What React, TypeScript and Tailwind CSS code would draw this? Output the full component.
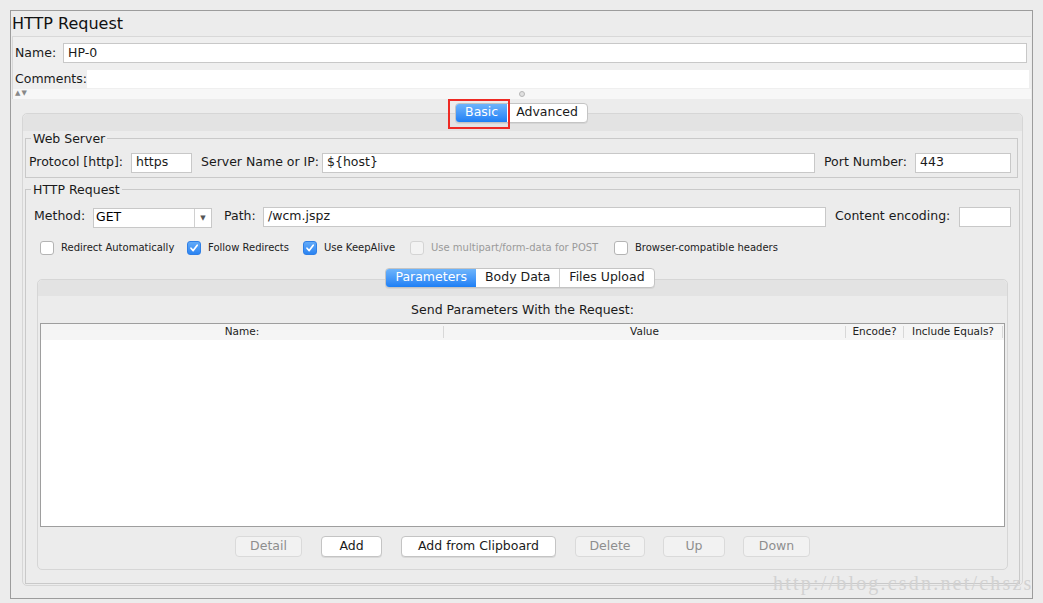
import React from "react"

const font = { fontFamily: '"DejaVu Sans", "Noto Sans", sans-serif' }

function Input({ value, className }: { value?: string; className?: string }) {
  return (
    <div
      className={
        "flex h-[20px] items-center border border-[#c8c8c8] bg-white px-[4px] text-[12.5px] text-[#1a1a1a] " +
        (className ?? "")
      }
    >
      {value}
    </div>
  )
}

function Check({ checked, disabled, label }: { checked?: boolean; disabled?: boolean; label: string }) {
  return (
    <div className="flex items-center gap-[7px]">
      <span
        className={
          "flex h-[14px] w-[14px] items-center justify-center rounded-[3px] border " +
          (checked
            ? "border-[#2f7fe6] bg-gradient-to-b from-[#62aaf8] to-[#2a84f2]"
            : disabled
              ? "border-[#d4d4d4] bg-[#f3f3f3]"
              : "border-[#b4b4b4] bg-white")
        }
      >
        {checked && (
          <svg width="10" height="10" viewBox="0 0 10 10">
            <path d="M2 5.2 L4.2 7.6 L8.2 2.2" stroke="white" strokeWidth="1.7" fill="none" strokeLinecap="round" strokeLinejoin="round" />
          </svg>
        )}
      </span>
      <span className={"text-[10px] " + (disabled ? "text-[#9a9a9a]" : "text-[#222]")}>{label}</span>
    </div>
  )
}

function Tabs({ items, active }: { items: string[]; active: number }) {
  return (
    <div className="flex h-[20px] overflow-hidden rounded-[4px] border border-[#c4c4c4] bg-white text-[12.5px] shadow-[0_1px_0_rgba(0,0,0,0.06)]">
      {items.map((t, i) => (
        <div
          key={t}
          className={
            "flex items-center px-[9px] " +
            (i === active
              ? "bg-gradient-to-b from-[#6db4fb] to-[#1c7ff5] text-white"
              : "text-[#1a1a1a]") +
            (i > 0 && i !== active + 1 ? " border-l border-[#d0d0d0]" : "")
          }
        >
          {t}
        </div>
      ))}
    </div>
  )
}

function Btn({ label, disabled, w }: { label: string; disabled?: boolean; w: string }) {
  return (
    <div
      className={
        "flex h-[21px] items-center justify-center rounded-[4px] border text-[12.5px] " +
        w +
        (disabled
          ? " border-[#dadada] bg-[#f2f2f2] text-[#8e8e8e]"
          : " border-[#c4c4c4] bg-white text-[#1a1a1a] shadow-[0_1px_0_rgba(0,0,0,0.08)]")
      }
    >
      {label}
    </div>
  )
}

export default function App() {
  return (
    <div className="relative h-[603px] w-[1043px] overflow-hidden bg-[#ececec] pl-[10px] pt-[10px]" style={font}>
      <div className="flex h-[589px] w-[1023px] flex-col border border-[#9c9c9c] bg-[#ececec]">
        {/* title */}
        <div className="flex h-[25px] items-center pl-[1px] text-[16px] text-[#111]">HTTP Request</div>

        {/* name / comments */}
        <div className="ml-[1px] mr-[1px] border-t border-l border-[#d8d8d8] bg-[#efefef] pt-[6px]">
          <div className="flex items-center">
            <span className="w-[50px] pl-[2px] text-[12.5px] text-[#1a1a1a]">Name:</span>
            <Input value="HP-0" className="w-[964px]" />
          </div>
          <div className="mt-[7px] flex items-center">
            <span className="w-[74px] pl-[2px] text-[12.5px] text-[#1a1a1a]">Comments:</span>
            <div className="h-[18px] w-[942px] bg-white" />
          </div>
          <div className="relative flex h-[10px] items-center bg-[#f7f7f7] pl-[2px] text-[7px] leading-none text-[#888]">
            <span>▲</span>
            <span className="ml-[1px]">▼</span>
            <span className="absolute left-[506px] top-[2px] h-[6px] w-[6px] rounded-full border border-[#b5b5b5] bg-[#e0e0e0]" />
          </div>
        </div>

        {/* main tab area */}
        <div className="relative flex-1 pl-[11px] pr-[9px] pt-[4px]">
          <div className="relative z-10 flex justify-center">
            <div className="pr-[2px]">
              <Tabs items={["Basic", "Advanced"]} active={0} />
            </div>
          </div>
          <div className="absolute left-[437px] top-[0px] z-20 h-[30px] w-[62px] border-2 border-[#ee2a24]" />

          <div className="-mt-[10px] h-[473px] rounded-[5px] border border-[#d6d6d6] bg-[#ececec]">
            <div className="h-[17px] rounded-t-[5px] bg-[#e3e3e3]" />
            <div className="pl-[2px] pr-[4px]">
              {/* Web server */}
              <fieldset className="mt-[1px] h-[46px] border border-[#c9c9c9] px-[3px]">
                <legend className="ml-[2px] px-[2px] text-[12.5px] leading-[14px] text-[#1a1a1a]">Web Server</legend>
                <div className="mt-[7px] flex items-center">
                  <span className="w-[102px] text-[12.5px] text-[#1a1a1a]">Protocol [http]:</span>
                  <Input value="https" className="w-[61px]" />
                  <span className="ml-[9px] w-[121px] text-[12.5px] text-[#1a1a1a]">Server Name or IP:</span>
                  <Input value="${host}" className="w-[493px]" />
                  <span className="ml-[9px] w-[91px] text-[12.5px] text-[#1a1a1a]">Port Number:</span>
                  <Input value="443" className="w-[96px]" />
                </div>
              </fieldset>

              {/* HTTP request */}
              <fieldset className="mt-[5px] h-[401px] border border-[#c9c9c9] px-[8px]">
                <legend className="ml-[-3px] px-[2px] text-[12.5px] leading-[14px] text-[#1a1a1a]">HTTP Request</legend>
                <div className="mt-[9px] flex items-center">
                  <span className="w-[59px] text-[12.5px] text-[#1a1a1a]">Method:</span>
                  <div className="mt-[2px] flex h-[20px] w-[119px] items-center border border-[#c8c8c8] bg-white text-[12.5px]">
                    <span className="flex-1 pl-[2px]">GET</span>
                    <span className="flex h-full w-[17px] items-center justify-center border-l border-[#d0d0d0] text-[7px] text-[#555]">▼</span>
                  </div>
                  <span className="ml-[12px] w-[39px] text-[12.5px] text-[#1a1a1a]">Path:</span>
                  <Input value="/wcm.jspz" className="w-[563px]" />
                  <span className="ml-[9px] w-[124px] text-[12.5px] text-[#1a1a1a]">Content encoding:</span>
                  <Input className="w-[52px]" />
                </div>
                <div className="mt-[11px] flex h-[18px] items-center pl-[6px]">
                  <div className="w-[147px]"><Check label="Redirect Automatically" /></div>
                  <div className="w-[116px]"><Check checked label="Follow Redirects" /></div>
                  <div className="w-[107px]"><Check checked label="Use KeepAlive" /></div>
                  <div className="w-[204px]"><Check disabled label="Use multipart/form-data for POST" /></div>
                  <Check label="Browser-compatible headers" />
                </div>

                {/* parameters */}
                <div className="relative mt-[11px] pl-[3px] pr-[3px]">
                  <div className="relative z-10 flex justify-center pr-[5px]">
                    <Tabs items={["Parameters", "Body Data", "Files Upload"]} active={0} />
                  </div>
                  <div className="-mt-[9px] h-[291px] rounded-[5px] border border-[#d6d6d6] bg-[#ececec]">
                    <div className="h-[16px] rounded-t-[5px] bg-[#e3e3e3]" />
                    <div className="flex h-[27px] items-center justify-center pt-[3px] text-[12.5px] text-[#1a1a1a]">
                      Send Parameters With the Request:
                    </div>
                    <div className="mx-[2px] h-[204px] border border-[#9e9e9e] bg-white">
                      <div className="flex h-[16px] items-center bg-[#f5f5f5] text-[10.5px] text-[#222]">
                        <div className="w-[402px] text-center">Name:</div>
                        <div className="h-[12px] w-px bg-[#d8d8d8]" />
                        <div className="w-[401px] text-center">Value</div>
                        <div className="h-[12px] w-px bg-[#d8d8d8]" />
                        <div className="w-[57px] text-center">Encode?</div>
                        <div className="h-[12px] w-px bg-[#d8d8d8]" />
                        <div className="w-[98px] text-center">Include Equals?</div>
                        <div className="h-[12px] w-px bg-[#d8d8d8]" />
                      </div>
                    </div>
                    <div className="mt-[9px] flex items-center pl-[197px]">
                      <Btn label="Detail" disabled w="w-[67px]" />
                      <div className="ml-[19px]"><Btn label="Add" w="w-[61px]" /></div>
                      <div className="ml-[19px]"><Btn label="Add from Clipboard" w="w-[155px]" /></div>
                      <div className="ml-[19px]"><Btn label="Delete" disabled w="w-[70px]" /></div>
                      <div className="ml-[18px]"><Btn label="Up" disabled w="w-[62px]" /></div>
                      <div className="ml-[18px]"><Btn label="Down" disabled w="w-[67px]" /></div>
                    </div>
                  </div>
                </div>
              </fieldset>
            </div>
          </div>
        </div>
      </div>
      <div
        className="absolute left-[773px] top-[573px] text-[20px] leading-none tracking-[2.2px] text-[#d2d2d2]"
        style={{ fontFamily: '"Liberation Serif", serif' }}
      >
        http://blog.csdn.net/chszs
      </div>
    </div>
  )
}
